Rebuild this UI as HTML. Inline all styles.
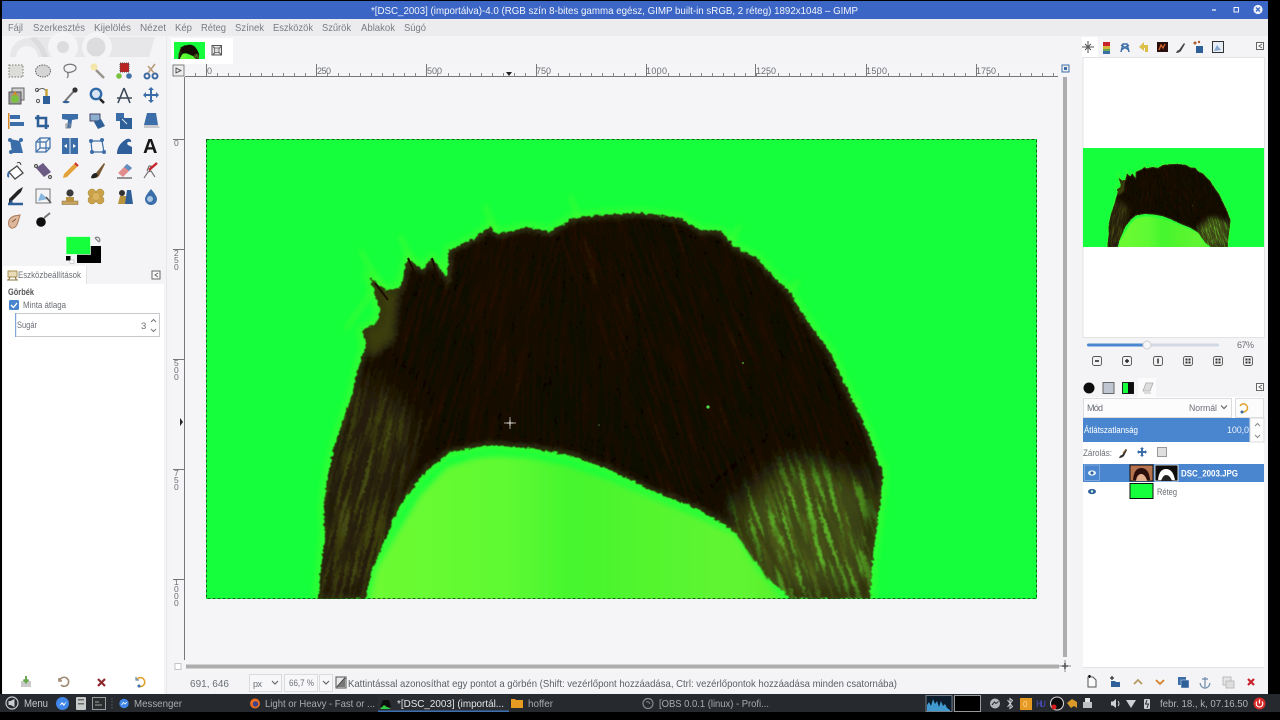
<!DOCTYPE html>
<html><head><meta charset="utf-8"><title>GIMP</title>
<style>html,body{margin:0;padding:0;background:#000;width:1280px;height:720px;overflow:hidden}svg{display:block}text{font-family:"Liberation Sans","DejaVu Sans",sans-serif;font-size:10px;fill:#6a6e74}</style></head>
<body>
<svg xmlns="http://www.w3.org/2000/svg" width="1280" height="720" viewBox="0 0 1280 720">
<defs>
<filter id="soft" x="0" y="0" width="100%" height="100%"><feGaussianBlur stdDeviation="0.32"/></filter>
<filter id="rough" x="-10%" y="-10%" width="120%" height="120%" color-interpolation-filters="sRGB"><feTurbulence type="fractalNoise" baseFrequency="0.22 0.3" numOctaves="3" seed="4"/><feDisplacementMap in="SourceGraphic" scale="5" xChannelSelector="R" yChannelSelector="G"/><feGaussianBlur stdDeviation="0.6"/></filter>
<filter id="streakB" x="0" y="0" width="100%" height="100%" color-interpolation-filters="sRGB"><feTurbulence type="fractalNoise" baseFrequency="0.3 0.016" numOctaves="3" seed="9"/><feColorMatrix values="0 0 0 0 0.17  0 0 0 0 0.09  0 0 0 0 0.02  3 0 0 0 -1.35"/></filter>
<filter id="streakO" x="0" y="0" width="100%" height="100%" color-interpolation-filters="sRGB"><feTurbulence type="fractalNoise" baseFrequency="0.24 0.016" numOctaves="3" seed="15"/><feColorMatrix values="0 0 0 0 0.3  0 0 0 0 0.34  0 0 0 0 0.09  4 0 0 0 -1.8"/></filter>
<filter id="streakG" x="0" y="0" width="100%" height="100%" color-interpolation-filters="sRGB"><feTurbulence type="fractalNoise" baseFrequency="0.2 0.016" numOctaves="3" seed="22"/><feColorMatrix values="0 0 0 0 0.36  0 0 0 0 0.7  0 0 0 0 0.16  6 0 0 0 -3.1"/><feGaussianBlur stdDeviation=".5"/></filter>
<filter id="b1" x="-20%" y="-20%" width="140%" height="140%"><feGaussianBlur stdDeviation="1.1"/></filter>
<filter id="b3" x="-20%" y="-20%" width="140%" height="140%" color-interpolation-filters="sRGB"><feGaussianBlur stdDeviation="3"/></filter>
<filter id="b4" x="-20%" y="-20%" width="140%" height="140%" color-interpolation-filters="sRGB"><feGaussianBlur stdDeviation="4"/></filter>
<filter id="b10" x="-40%" y="-40%" width="180%" height="180%"><feGaussianBlur stdDeviation="13"/></filter>
<linearGradient id="faceG" gradientUnits="userSpaceOnUse" x1="380" y1="0" x2="800" y2="0"><stop offset="0" stop-color="#6cfa33"/><stop offset=".3" stop-color="#5ffa32"/><stop offset=".46" stop-color="#45f62e"/><stop offset=".62" stop-color="#52f52f"/><stop offset=".85" stop-color="#62f531"/><stop offset="1" stop-color="#50f02c"/></linearGradient>
<clipPath id="cv"><rect x="206" y="139" width="831" height="460"/></clipPath>
<clipPath id="hc"><use href="#hairP"/></clipPath>
<mask id="mR" maskUnits="userSpaceOnUse" x="206" y="139" width="831" height="460"><path d="M730,510 L790,460 L870,480 L875,599 L770,599 Z" fill="#fff" filter="url(#b10)"/></mask>
<mask id="mL" maskUnits="userSpaceOnUse" x="206" y="139" width="831" height="460"><path d="M315,599 L325,470 L365,370 L420,420 L400,500 L370,599 Z" fill="#fff" filter="url(#b10)"/></mask>
<pattern id="tickH" x="206" y="0" width="11" height="80" patternUnits="userSpaceOnUse"><rect x="0" y="73" width="1" height="4" fill="#888"/></pattern>
<pattern id="tickV" x="0" y="139" width="80" height="11" patternUnits="userSpaceOnUse"><rect x="179" y="0" width="5" height="1" fill="#888"/></pattern>
<path id="hairP" d="M318,599 L321,570 L325,535 L324,505 L328,475 L335,445 L345,415 L352,395 L358,370 L366,345 L362,331 L378,322 L380,310 L370,278 L385,290 L400,288 L408,258 L422,270 L432,258 L447,278 L449,250 L465,243 L478,236 L490,226 L497,234 L507,232 L527,227 L550,232 L573,218 L600,215 L640,213 L680,218 L700,230 L722,232 L735,247 L757,258 L775,278 L790,292 L800,310 L815,332 L830,352 L842,378 L855,405 L868,432 L878,462 L883,470 L881,495 L878,520 L873,555 L870,599 L792,599 L770,580 L755,560 L735,532 L700,510 L650,490 L610,470 L570,455 L530,448 L490,445 L450,452 L425,472 L400,505 L385,540 L372,570 L365,599 Z"/>
<g id="art">
<rect x="206" y="139" width="831" height="460" fill="#14ff3c"/>
<use href="#hairP" fill="none" stroke="#4cff2c" stroke-width="8" filter="url(#b4)" opacity=".7"/>
<path d="M345,330 L372,292 M360,250 L385,292 M400,235 L415,270 M485,205 L495,232 M570,195 L580,222 M740,225 L728,245 M800,280 L785,295 M860,400 L848,410" stroke="#45ff30" stroke-width="3" fill="none" filter="url(#b3)"/>
<g filter="url(#rough)">
<use href="#hairP" fill="#100703"/>
<g clip-path="url(#hc)">
<g transform="rotate(16 420 420)" opacity=".75"><rect x="250" y="200" width="260" height="460" fill="#000" filter="url(#streakB)"/></g>
<rect x="470" y="200" width="160" height="280" fill="#000" filter="url(#streakB)" opacity=".55"/>
<g transform="rotate(-20 740 380)" opacity=".8"><rect x="620" y="170" width="300" height="460" fill="#000" filter="url(#streakB)"/></g>
<use href="#hairP" fill="none" stroke="#343810" stroke-width="7" filter="url(#b3)"/>
<g mask="url(#mL)"><rect x="300" y="350" width="130" height="260" fill="#2a2209" opacity=".9"/><g transform="rotate(14 360 480)" opacity=".8"><rect x="280" y="340" width="180" height="290" fill="#000" filter="url(#streakO)"/></g></g>
<path d="M362,331 L378,322 L380,310 L370,278 L385,290 L400,288 L395,340 L370,360 Z" fill="#3a3c10" filter="url(#b4)"/>
<g mask="url(#mR)"><rect x="700" y="440" width="200" height="170" fill="#3d4715"/><g transform="rotate(-17 800 530)"><rect x="680" y="410" width="240" height="240" fill="#000" filter="url(#streakO)"/><rect x="680" y="410" width="240" height="240" fill="#000" filter="url(#streakG)"/></g></g>
</g>
</g>
<path d="M367,610 L376,570 L397,533 L420,495 L447,467 L475,458 L497,456 L530,458 L570,466 L610,480 L650,497 L700,518 L735,535 L760,572 L792,610 Z" fill="url(#faceG)" filter="url(#b3)"/>
<g fill="none" stroke-linecap="round" filter="url(#b1)"><path d="M745,535 L768,578 M758,530 L790,588 M735,528 L755,560" stroke="#3a3a10" stroke-width="2.400"/></g>
<path d="M375,283 L388,300 M408,258 L420,285 M432,258 L440,285" stroke="#1a0b02" stroke-width="2" fill="none"/>
<circle cx="708" cy="407" r="1.600" fill="#50e04a"/><circle cx="743" cy="363" r="1" fill="#4c9a2c"/><circle cx="599" cy="425" r=".8" fill="#5a7a3a"/>
</g>
</defs>
<g filter="url(#soft)">
<rect width="1280" height="720" fill="#000"/>
<!-- window -->
<rect x="2" y="1" width="1266" height="18" fill="#3b66c5"/>
<text x="371" y="14" style="font-size:10.5px;fill:#f2f5fc" textLength="487" lengthAdjust="spacingAndGlyphs">*[DSC_2003] (importálva)-4.0 (RGB szín 8-bites gamma egész, GIMP built-in sRGB, 2 réteg) 1892x1048 – GIMP</text>
<g stroke="#eef2fb" stroke-width="1.3" fill="none"><path d="M1212,10 h4"/><rect x="1234" y="7.5" width="4.5" height="4.5" stroke-width="1"/></g>
<circle cx="1258" cy="9.5" r="4.6" fill="#f1f3fb"/><path d="M1256,7.5 l4,4 m0,-4 l-4,4" stroke="#3b66c5" stroke-width="1.3"/>
<rect x="2" y="19" width="1266" height="675" fill="#f4f4f6"/>
<rect x="2" y="19" width="1266" height="17" fill="#ececee"/>
<!-- menu -->
<g>
<text x="8" y="31" style="font-size:10.5px;fill:#787c82" textLength="15" lengthAdjust="spacingAndGlyphs">Fájl</text>
<text x="33" y="31" style="font-size:10.5px;fill:#787c82" textLength="52" lengthAdjust="spacingAndGlyphs">Szerkesztés</text>
<text x="94" y="31" style="font-size:10.5px;fill:#787c82" textLength="37" lengthAdjust="spacingAndGlyphs">Kijelölés</text>
<text x="140" y="31" style="font-size:10.5px;fill:#787c82" textLength="26" lengthAdjust="spacingAndGlyphs">Nézet</text>
<text x="175" y="31" style="font-size:10.5px;fill:#787c82" textLength="17" lengthAdjust="spacingAndGlyphs">Kép</text>
<text x="201" y="31" style="font-size:10.5px;fill:#787c82" textLength="25" lengthAdjust="spacingAndGlyphs">Réteg</text>
<text x="235" y="31" style="font-size:10.5px;fill:#787c82" textLength="29" lengthAdjust="spacingAndGlyphs">Színek</text>
<text x="273" y="31" style="font-size:10.5px;fill:#787c82" textLength="40" lengthAdjust="spacingAndGlyphs">Eszközök</text>
<text x="322" y="31" style="font-size:10.5px;fill:#787c82" textLength="29" lengthAdjust="spacingAndGlyphs">Szűrök</text>
<text x="361" y="31" style="font-size:10.5px;fill:#787c82" textLength="34" lengthAdjust="spacingAndGlyphs">Ablakok</text>
<text x="404" y="31" style="font-size:10.5px;fill:#787c82" textLength="22" lengthAdjust="spacingAndGlyphs">Súgó</text>
</g>
<!-- wilber ghost -->
<path d="M10,57 q1,-19 24,-20 h121 l-6,20 Z" fill="#e7e7e9"/>
<path d="M16,57 a11,11 0 0 1 22,0 Z" fill="#f4f4f6"/>
<path d="M34,37 q10,6 14,20 h-6 q-2,-10 -12,-18 Z" fill="#dcdcde"/>
<circle cx="63" cy="47" r="15" fill="#f4f4f6"/><circle cx="63" cy="47" r="6" fill="#dcdcde"/><circle cx="97" cy="47" r="15" fill="#f4f4f6"/><circle cx="96" cy="47" r="9.500" fill="#dcdcde"/>
<!-- toolbox row 1 -->
<rect x="9" y="65" width="14" height="12" fill="#dcdcd8" stroke="#777" stroke-dasharray="1.500 1.500"/>
<ellipse cx="43" cy="71" rx="7.500" ry="6" fill="#d5d5d5" stroke="#666" stroke-dasharray="1.500 1"/>
<path d="M64,68 c0,-5 12,-5 12,0 c0,4 -8,5 -9,4 c2,2 1,5 0,6 M64,68 c0,3 2,4 3,4" fill="none" stroke="#777" stroke-width="1.200"/>
<path d="M96,70 L104,78" stroke="#9a958a" stroke-width="2.500"/><circle cx="94" cy="67" r="3.500" fill="#f3e6a8"/>
<rect x="120" y="63" width="9" height="9" fill="#b22" stroke="#555" stroke-dasharray="1 1"/><circle cx="119" cy="76" r="2.800" fill="#7ac142"/><circle cx="129" cy="76" r="2.800" fill="#3f6fa8"/>
<g fill="none" stroke="#3e6aa3" stroke-width="2"><circle cx="147" cy="76" r="2.500"/><circle cx="155" cy="76" r="2.500"/><path d="M148,73 L155,64 M154,73 L148,66" stroke="#b89a78" stroke-width="1.500"/></g>
<!-- row 2 -->
<rect x="12" y="88" width="12" height="12" fill="#cfcfcf" stroke="#666"/><rect x="9" y="92" width="12" height="12" fill="#9a9a9a" stroke="#555"/><path d="M15,91 l3,5 h-6 Z" fill="#d68a2e"/><circle cx="15" cy="99" r="4" fill="#7ac142"/>
<path d="M37,91 q6,-5 9,0" fill="none" stroke="#666"/><circle cx="37" cy="90" r="1.600" fill="none" stroke="#555"/><circle cx="38" cy="101" r="1.600" fill="none" stroke="#555"/><rect x="43" y="96" width="7" height="8" fill="#2f5f98"/><path d="M46.500,89 v7" stroke="#c9a53b" stroke-width="2.500"/>
<path d="M65,101 L74,91" stroke="#777" stroke-width="2"/><circle cx="75" cy="90" r="2.600" fill="#333"/><ellipse cx="66" cy="102" rx="3.500" ry="1.300" fill="#2f5f98"/>
<circle cx="96" cy="94" r="5.200" fill="#dbe6f2" stroke="#2f6aa8" stroke-width="2.400"/><path d="M100,99 L104,103" stroke="#222" stroke-width="2.600"/>
<path d="M124,88 L118,103 M124,88 L130,103 M117,98 h15" fill="none" stroke="#3d4a5a" stroke-width="1.600"/>
<path d="M151,87 l3,3 h-2 v4 h4 v-2 l3,3 l-3,3 v-2 h-4 v4 h2 l-3,3 l-3,-3 h2 v-4 h-4 v2 l-3,-3 l3,-3 v2 h4 v-4 h-2 Z" fill="#3b6ea8"/>
<!-- row 3 -->
<rect x="8" y="113" width="1.500" height="16" fill="#d68a2e"/><rect x="10" y="115" width="10" height="4" fill="#3b6ea8"/><rect x="10" y="122" width="14" height="4" fill="#3b6ea8"/>
<path d="M38,115 v11 h11 M35,118 h11 v11" fill="none" stroke="#2f5f98" stroke-width="2.600"/>
<path d="M62,114 h16 v5 l-6,1 l-1,8 h-4 l1,-8 l-6,-1 Z" fill="#3b6ea8"/><rect x="66" y="124" width="4" height="4" fill="none" stroke="#888"/>
<rect x="90" y="114" width="10" height="7" fill="#8eaed0" stroke="#446"/><path d="M94,122 l7,-3 l4,7 l-7,3 Z" fill="#2f5f98"/>
<rect x="116" y="113" width="8" height="8" fill="#3b6ea8"/><rect x="120" y="118" width="12" height="11" fill="#2f5f98"/><path d="M122,119 l5,5" stroke="#dfe8f2"/>
<path d="M147,113 h9 l2,12 h-14 Z" fill="#3b6ea8"/><path d="M144,125 h14 l2,3 h-16 Z" fill="#c9c9cf"/>
<!-- row 4 -->
<path d="M10,139 L20,141 L23,153 H12 Z" fill="#3b6ea8"/><circle cx="10" cy="140" r="2" fill="#3b6ea8"/><circle cx="21" cy="140" r="2" fill="#3b6ea8"/><circle cx="11" cy="152" r="2" fill="#3b6ea8"/>
<path d="M36,142 h10 v10 h-10 Z M40,138 h10 v10 h-10 Z M36,142 l4,-4 M46,142 l4,-4 M46,152 l4,-4 M36,152 l4,-4" fill="none" stroke="#3b6ea8" stroke-width="1.200"/>
<rect x="62" y="138" width="16" height="16" fill="#3b6ea8"/><rect x="69.500" y="138" width="1" height="16" fill="#dfe8f2"/><path d="M64,146 l3,-2 v4 Z M76,146 l-3,-2 v4 Z" fill="#fff"/>
<path d="M91,141 h11 l2,11 h-12 Z" fill="none" stroke="#3b6ea8" stroke-width="1.200"/><g fill="#3b6ea8"><circle cx="91" cy="141" r="2"/><circle cx="102" cy="140" r="2"/><circle cx="92" cy="152" r="2"/><circle cx="104" cy="152" r="2"/></g>
<path d="M117,154 c0,-5 2,-10 8,-14 c4,-3 7,0 6,2 c-3,-1 -5,1 -3,3 l4,2 v7 Z" fill="#2f5f98"/>
<text x="143" y="153" style="font-size:20px;font-weight:bold;fill:#151515">A</text>
<!-- row 5 -->
<path d="M9,172 l8,-6 l6,7 l-8,6 Z" fill="#fff" stroke="#444" stroke-width="1.300"/><path d="M17,163 q3,-2 4,2" fill="none" stroke="#444"/><path d="M9,172 q-2,4 0,5" stroke="#3b6ea8" stroke-width="2" fill="none"/>
<path d="M36,168 l7,-5 l8,9 l-7,5 Z" fill="#6a5a84"/><circle cx="36" cy="166" r="1.600" fill="#bbb" stroke="#555"/><circle cx="50" cy="177" r="1.600" fill="#bbb" stroke="#555"/>
<path d="M63,178 l1,-4 l11,-11 l3,3 l-11,11 Z" fill="#e3a13a"/><path d="M75,163 l3,3" stroke="#c33" stroke-width="2"/>
<path d="M91,178 q1,-5 5,-5 l8,-10 l1,1 l-6,12 q-3,3 -8,2 Z" fill="#7a5a30"/><path d="M91,178 q1,-5 5,-5 l2,2 q-2,4 -7,3Z" fill="#222"/>
<path d="M118,173 l9,-9 l5,4 l-9,9 Z" fill="#e28d8d"/><path d="M127,164 l5,4 l-3,3 l-5,-4 Z" fill="#5f8fc0"/><path d="M117,178 h15" stroke="#555" stroke-width="1.200"/>
<path d="M144,178 l4,-6 l3,-1 l4,6 M147,171 l2,-5 h2 l-2,6" fill="none" stroke="#666" stroke-width="1.100"/><path d="M149,170 l8,-7" stroke="#c8242c" stroke-width="2.400"/>
<!-- row 6 -->
<path d="M9,204 v-5 l9,-9 l5,-3 l-2,5 l-9,9 Z" fill="#222"/><path d="M8,204 h15" stroke="#2f5f98" stroke-width="2.500"/><path d="M10,199 l3,3 l-2,2 Z" fill="#2f5f98"/>
<rect x="36" y="189" width="14" height="14" fill="#f4f4f4" stroke="#777"/><path d="M38,201 l3,-8 l7,6 Z" fill="#88b8e0"/><path d="M46,197 l5,6" stroke="#555" stroke-width="1.600"/>
<rect x="62" y="201" width="16" height="3.500" fill="#c9a35c" stroke="#7a6a44" stroke-width=".5"/><rect x="66" y="197" width="8" height="4" fill="#b8923c"/><circle cx="70" cy="193" r="3.600" fill="#3a3a3a"/>
<g fill="#c9a24a" stroke="#a88838" stroke-width=".5"><circle cx="92" cy="193" r="4"/><circle cx="100" cy="193" r="4"/><circle cx="92" cy="200" r="4"/><circle cx="100" cy="200" r="4"/></g><circle cx="96" cy="196.500" r="3.500" fill="#d9b35e"/>
<path d="M118,204 l2,-8 h6 v8 Z" fill="#b8923c"/><circle cx="122" cy="193" r="3" fill="#333"/><path d="M127,190 h4 l2,14 h-8 Z" fill="#2f5f98"/>
<path d="M151,189 q6,7 6,10 a6,6 0 0 1 -12,0 q0,-3 6,-10 Z" fill="#3b6ea8"/><circle cx="150" cy="199" r="3" fill="#a9c6e2"/>
<!-- row 7 -->
<path d="M9,226 q-2,-7 5,-10 l6,-1 l-2,7 q-2,7 -7,6 Z" fill="#dfb79a" stroke="#a8795a" stroke-width="1"/><path d="M12,222 l4,-3" stroke="#7a5a44"/>
<circle cx="41" cy="222" r="4.800" fill="#111"/><path d="M44,218 l6,-5" stroke="#777" stroke-width="2"/>
<!-- fg/bg -->
<rect x="77" y="246" width="24" height="17" fill="#000"/><rect x="66" y="236.500" width="24.500" height="18" fill="#14ff3c" stroke="#fff" stroke-width=".6"/>
<rect x="66" y="256" width="4.500" height="4.500" fill="#000"/><rect x="70" y="260" width="4" height="3.500" fill="#fff" stroke="#999" stroke-width=".4"/>
<path d="M95,238 a2,2 0 1 1 4,4 M95,238 l4,4" fill="none" stroke="#888" stroke-width="1.300"/>
<!-- tool options -->
<rect x="166" y="36" width="1" height="658" fill="#e8e8ea"/>
<rect x="3" y="284" width="161" height="410" fill="#fff"/>
<rect x="3" y="266" width="83" height="18" fill="#fff"/><rect x="86" y="266" width="1" height="18" fill="#e3e3e5"/>
<path d="M8,271 h9 v6 h-9 Z" fill="#e9dcb8" stroke="#a68c4c" stroke-width=".9"/><path d="M7,280 h11 M10,277 l-1.500,3 M15,277 l1.500,3" stroke="#8a7440" stroke-width="1" fill="none"/>
<text x="18" y="278" style="font-size:9px" textLength="63" lengthAdjust="spacingAndGlyphs">Eszközbeállítások</text>
<rect x="152" y="271" width="8" height="8" fill="#fafafa" stroke="#666"/><path d="M158,273 l-3,2 l3,2" fill="none" stroke="#666"/>
<text x="8" y="295" style="font-size:9px;font-weight:bold;fill:#555" textLength="26" lengthAdjust="spacingAndGlyphs">Görbék</text>
<rect x="9" y="300" width="10" height="10" rx="1.500" fill="#4a86cf"/><path d="M11,305 l2.500,2.500 l3.500,-4.500" stroke="#fff" stroke-width="1.400" fill="none"/>
<text x="23" y="308" style="font-size:9px" textLength="43" lengthAdjust="spacingAndGlyphs">Minta átlaga</text>
<rect x="15.500" y="313.500" width="144" height="23" fill="#fff" stroke="#c9c9cd"/><rect x="15" y="313" width="1.200" height="24" fill="#7fa6d6"/>
<text x="17" y="328" style="font-size:9px" textLength="20" lengthAdjust="spacingAndGlyphs">Sugár</text>
<text x="141" y="329" style="font-size:9.500px">3</text>
<path d="M151,322 l2.500,-2.500 l2.500,2.500 M151,329 l2.500,2.500 l2.500,-2.500" fill="none" stroke="#777"/>
<!-- canvas region -->
<rect x="171" y="38" width="62" height="26" fill="#fff"/>
<rect x="171" y="64" width="900" height="608" fill="#f5f5f7"/>
<rect x="184" y="77" width="874" height="583" fill="#f5f5f8"/>
<rect x="174" y="42" width="31" height="17" fill="#14ff3c"/>
<svg x="174" y="42" width="31" height="17" viewBox="206 139 831 460"><use href="#art" clip-path="url(#cv)"/></svg>
<rect x="212" y="45.500" width="9.500" height="9.500" fill="#e8e8e8" stroke="#555"/><path d="M213,46.500 l8,8 m0,-8 l-8,8" stroke="#555"/><rect x="214.500" y="48" width="4.500" height="4.500" fill="#ddd" stroke="#555" stroke-width=".7"/>
<!-- rulers -->
<rect x="173" y="65" width="11" height="11" fill="#eee" stroke="#666" stroke-width=".8"/><path d="M176,68 v5 l5,-2.500 Z" fill="none" stroke="#555"/>
<rect x="185" y="76" width="873" height="1" fill="#777"/><rect x="184" y="77" width="1" height="583" fill="#777"/>
<rect x="186" y="64" width="872" height="12" fill="url(#tickH)"/>
<rect x="173" y="77" width="11" height="583" fill="url(#tickV)"/>
<g fill="#777"><rect x="206" y="64" width="1" height="12"/><rect x="316" y="64" width="1" height="12"/><rect x="426" y="64" width="1" height="12"/><rect x="536" y="64" width="1" height="12"/><rect x="646" y="64" width="1" height="12"/><rect x="755" y="64" width="1" height="12"/><rect x="866" y="64" width="1" height="12"/><rect x="976" y="64" width="1" height="12"/></g>
<g><text x="207" y="74" style="font-size:9px">0</text><text x="317" y="74" style="font-size:9px" textLength="14">250</text><text x="427" y="74" style="font-size:9px" textLength="15">500</text><text x="536" y="74" style="font-size:9px" textLength="15">750</text><text x="646" y="74" style="font-size:9px" textLength="21">1000</text><text x="756" y="74" style="font-size:9px" textLength="20">1250</text><text x="866" y="74" style="font-size:9px" textLength="21">1500</text><text x="976" y="74" style="font-size:9px" textLength="20">1750</text></g>
<path d="M506,72 h6 l-3,4 Z" fill="#222"/>
<g fill="#777"><rect x="173" y="139" width="11" height="1"/><rect x="173" y="249" width="11" height="1"/><rect x="173" y="359" width="11" height="1"/><rect x="173" y="469" width="11" height="1"/><rect x="173" y="579" width="11" height="1"/></g>
<g><text x="174" y="146" style="font-size:8.500px">0</text>
<text x="174" y="256" style="font-size:8.500px">2</text><text x="174" y="263" style="font-size:8.500px">5</text><text x="174" y="270" style="font-size:8.500px">0</text>
<text x="174" y="366" style="font-size:8.500px">5</text><text x="174" y="373" style="font-size:8.500px">0</text><text x="174" y="380" style="font-size:8.500px">0</text>
<text x="174" y="476" style="font-size:8.500px">7</text><text x="174" y="483" style="font-size:8.500px">5</text><text x="174" y="490" style="font-size:8.500px">0</text>
<text x="174" y="585" style="font-size:8.500px">1</text><text x="174" y="592" style="font-size:8.500px">0</text><text x="174" y="599" style="font-size:8.500px">0</text><text x="174" y="606" style="font-size:8.500px">0</text></g>
<path d="M180,418 v8 l3,-4 Z" fill="#222"/>
<!-- image -->
<use href="#art" clip-path="url(#cv)"/>
<rect x="206.500" y="139.500" width="830" height="459" fill="none" stroke="#0b3a12" stroke-dasharray="3 2" stroke-width=".8"/>
<path d="M510,417 v12 M504,423 h12" stroke="#8a8a80" stroke-width="1.200"/><path d="M507,423 h6 M510,420 v6" stroke="#e8e8e0" stroke-width=".8"/>
<!-- scrollbars -->
<rect x="1062" y="65" width="7" height="7" fill="#eee" stroke="#3b6ea8"/><rect x="1064" y="67" width="3" height="3" fill="#3b6ea8"/>
<rect x="1063" y="77" width="4" height="580" fill="#adadad"/>
<rect x="186" y="664.500" width="873" height="4" fill="#adadad"/>
<rect x="175" y="663.500" width="6" height="6" fill="#fff" stroke="#c4c4c4"/>
<path d="M1065,660 v12 M1059,666 h12" stroke="#888"/><path d="M1065,663 v6 M1062,666 h6" stroke="#555" stroke-width="1.600"/>
<!-- status -->
<rect x="167" y="672" width="905" height="22" fill="#f4f4f6"/>
<text x="190" y="687" style="font-size:10px" textLength="39" lengthAdjust="spacingAndGlyphs">691, 646</text>
<rect x="249.500" y="674.500" width="32" height="17" fill="#f7f7f9" stroke="#dcdcdf"/><text x="253" y="687" style="font-size:9px" textLength="9">px</text><path d="M272,681 l3,3 l3,-3" fill="none" stroke="#666" stroke-width="1.200"/>
<rect x="284.500" y="674.500" width="33" height="17" fill="#f7f7f9" stroke="#dcdcdf"/><text x="289" y="686" style="font-size:9px" textLength="25" lengthAdjust="spacingAndGlyphs">66,7 %</text>
<rect x="319.500" y="674.500" width="13" height="17" fill="#f7f7f9" stroke="#dcdcdf"/><path d="M323,681 l3,3 l3,-3" fill="none" stroke="#666" stroke-width="1.200"/>
<rect x="336" y="677" width="10" height="11" fill="#e8e8e8" stroke="#555"/><path d="M337,687 L345,678" stroke="#222" stroke-width="1.300"/><path d="M337,687 L345,678 V687 Z" fill="#777"/>
<text x="348" y="687" style="font-size:10.500px;fill:#5a5e64" textLength="549" lengthAdjust="spacingAndGlyphs">Kattintással azonosíthat egy pontot a görbén (Shift: vezérlőpont hozzáadása, Ctrl: vezérlőpontok hozzáadása minden csatornába)</text>
<!-- tool options bottom -->
<path d="M21,681 h10 v6 h-10 Z" fill="#c9c9c9"/><path d="M26,676 v6 M23.500,679.500 l2.500,3 l2.500,-3" stroke="#6aa84f" stroke-width="2" fill="none"/>
<path d="M60,680 a4.500,4.500 0 1 1 1,5 M59,678 v3 h3" fill="none" stroke="#a08a72" stroke-width="1.600"/>
<path d="M98,679 l7,7 m0,-7 l-7,7" stroke="#8e2a2e" stroke-width="2.200"/>
<path d="M137,679 a4.500,4.500 0 1 1 1,7" fill="none" stroke="#e0a22a" stroke-width="1.600"/><circle cx="139" cy="686" r="1.500" fill="#3b6ea8"/><path d="M136,677 v3 h3" fill="none" stroke="#3b6ea8"/>
<!-- right dock -->
<rect x="1076" y="36" width="192" height="658" fill="#f4f4f6"/>
<rect x="1082" y="37" width="16" height="20" fill="#fff"/>
<rect x="1083" y="57.500" width="181.500" height="280" fill="#fff" stroke="#e3e3e5"/>
<path d="M1088,41 v12 M1082,47 h12 M1085,44 l6,6 M1091,44 l-6,6" stroke="#555" stroke-width="1"/>
<rect x="1103" y="42" width="7" height="4" fill="#c8242c"/><rect x="1103" y="46" width="7" height="3" fill="#d8b43a"/><rect x="1103" y="49" width="7" height="2" fill="#6aa84f"/><rect x="1103" y="51" width="7" height="3" fill="#3b6ea8"/>
<path d="M1121,52 l2,-8 h4 l2,8 M1121,45 l8,5 m0,-5 l-8,5" fill="none" stroke="#3b6ea8" stroke-width="1.500"/>
<path d="M1139,47 l5,-5 v3 h4 v7 h-3 v-4 h-1 v3 Z" fill="#dcc04a"/>
<rect x="1157" y="42" width="11" height="10" fill="#2a1008"/><path d="M1159,50 l2,-5 l2,3 l2,-4" stroke="#d8642a" fill="none" stroke-width="1.300"/>
<path d="M1176,53 q1,-3 3,-3 l5,-7 l1,1 l-4,7 q-2,2 -5,2 Z" fill="#444"/>
<rect x="1196" y="46" width="7" height="7" fill="#2f5f98"/><circle cx="1195" cy="43" r="1.500" fill="#a8592a"/><circle cx="1199" cy="42" r="1.200" fill="#a8592a"/>
<rect x="1212.500" y="41.500" width="11" height="11" fill="#e6edf5" stroke="#333"/><path d="M1214,51 l3,-6 l4,5" fill="#88a8d0"/>
<rect x="1256.500" y="42.500" width="7" height="7" fill="#fafafa" stroke="#666"/><path d="M1262,44 l-3,2 l3,2" fill="none" stroke="#666"/>
<!-- nav thumb -->
<rect x="1083" y="148" width="181" height="99" fill="#14ff3c"/>
<svg x="1083" y="148" width="181" height="99" viewBox="206 139 831 460" preserveAspectRatio="none"><use href="#art" clip-path="url(#cv)"/></svg>
<!-- slider -->
<rect x="1087" y="343.500" width="132" height="3" rx="1.500" fill="#d2d8e4"/><rect x="1087" y="343.500" width="60" height="3" rx="1.500" fill="#4a86cf"/>
<circle cx="1147" cy="345" r="4" fill="#f6f6f6" stroke="#cfcfd2"/>
<text x="1237" y="348" style="font-size:9px" textLength="17">67%</text>
<g fill="#f2f2f2" stroke="#555" stroke-width=".9"><rect x="1092.500" y="356.500" width="9" height="9" rx="2"/><rect x="1122.500" y="356.500" width="9" height="9" rx="2"/><rect x="1153.500" y="356.500" width="9" height="9" rx="2"/><rect x="1183.500" y="356.500" width="9" height="9" rx="2"/><rect x="1213.500" y="356.500" width="9" height="9" rx="2"/><rect x="1243.500" y="356.500" width="9" height="9" rx="2"/></g>
<g stroke="#222" stroke-width="1.400"><path d="M1095,361 h4 M1125,361 h4 M1127,359 v4 M1158,358.500 v5"/></g>
<g fill="#333"><rect x="1185.500" y="358.500" width="2" height="2"/><rect x="1188.500" y="358.500" width="2" height="2"/><rect x="1185.500" y="361.500" width="2" height="2"/><rect x="1188.500" y="361.500" width="2" height="2"/><rect x="1215.500" y="358.500" width="2" height="2"/><rect x="1218.500" y="358.500" width="2" height="2"/><rect x="1215.500" y="361.500" width="2" height="2"/><rect x="1218.500" y="361.500" width="2" height="2"/><rect x="1245.500" y="358.500" width="2" height="2"/><rect x="1248.500" y="358.500" width="2" height="2"/><rect x="1245.500" y="361.500" width="2" height="2"/><rect x="1248.500" y="361.500" width="2" height="2"/></g>
<!-- layers tabs -->
<rect x="1138" y="378" width="18" height="19" fill="#fbfbfb"/>
<circle cx="1089" cy="388" r="5.500" fill="#111"/>
<rect x="1103" y="382.500" width="11" height="11" fill="#bfc6d2" stroke="#666"/>
<rect x="1122.500" y="382.500" width="11" height="11" fill="#14ff3c" stroke="#222"/><rect x="1128" y="382.500" width="5.500" height="11" fill="#111"/>
<path d="M1143,391 l3,-8 h7 l-3,8 Z M1144,393 h7" fill="#ddd" stroke="#aaa" stroke-width=".8"/>
<rect x="1256.500" y="383.500" width="7" height="7" fill="#fafafa" stroke="#666"/><path d="M1262,385 l-3,2 l3,2" fill="none" stroke="#666"/>
<rect x="1083" y="397" width="181" height="297" fill="#fff"/>
<rect x="1083.500" y="398.500" width="148" height="19" fill="#fcfcfd" stroke="#dcdcdf"/>
<text x="1087" y="411" style="font-size:9px" textLength="16">Mód</text><text x="1189" y="411" style="font-size:9px" textLength="28" lengthAdjust="spacingAndGlyphs">Normál</text>
<path d="M1221,405.500 l3,3 l3,-3 M1252,405.500 l3,3 l3,-3" fill="none" stroke="#666" stroke-width="1.200"/>
<rect x="1235.500" y="398.500" width="28" height="19" fill="#fcfcfd" stroke="#dcdcdf"/>
<path d="M1240,406 a4,4 0 1 1 1,5" fill="none" stroke="#e0a22a" stroke-width="1.500"/><circle cx="1242" cy="412" r="1.500" fill="#3b6ea8"/>
<rect x="1083" y="418" width="167" height="24" fill="#4a86cf"/>
<rect x="1250" y="418" width="14" height="24" fill="#fcfcfd" stroke="#dcdcdf"/>
<text x="1084" y="433" style="font-size:9px;fill:#fff" textLength="54" lengthAdjust="spacingAndGlyphs">Átlátszatlanság</text>
<text x="1227" y="433" style="font-size:9px;fill:#e8f0fa" textLength="22">100,0</text>
<path d="M1255,426 l2.500,-2.500 l2.500,2.500 M1255,435 l2.500,2.500 l2.500,-2.500" fill="none" stroke="#888"/>
<text x="1083" y="456" style="font-size:9px" textLength="29" lengthAdjust="spacingAndGlyphs">Zárolás:</text>
<path d="M1119,458 q1,-3 3,-3 l4,-6 l1,1 l-3,6 q-2,2 -5,2 Z" fill="#333"/><path d="M1123,453 l3,-4" stroke="#a87a3a"/>
<path d="M1142,447 l2,2 h-1 v2 h2 v-1 l2,2 l-2,2 v-1 h-2 v2 h1 l-2,2 l-2,-2 h1 v-2 h-2 v1 l-2,-2 l2,-2 v1 h2 v-2 h-1 Z" fill="#3b6ea8"/>
<rect x="1157.500" y="447.500" width="9" height="9" fill="#dfdfdf" stroke="#999"/>
<!-- layer list -->
<rect x="1083" y="464" width="181" height="18" fill="#4a86cf"/>
<rect x="1084.500" y="465" width="15" height="15.500" fill="none" stroke="#7fa8dc"/>
<ellipse cx="1092" cy="473" rx="4" ry="2.600" fill="#e8f0fa"/><circle cx="1092" cy="473" r="1.500" fill="#2f5f98"/>
<ellipse cx="1092" cy="491.500" rx="4" ry="2.600" fill="#2f5f98"/><circle cx="1092" cy="491.500" r="1.200" fill="#cfe"/>
<rect x="1130" y="465" width="23" height="16" fill="#b6714e" stroke="#111"/><path d="M1133,480 q1,-12 8,-12 q8,0 9,12 h-3 q-2,-6 -6,-6 q-4,0 -5,6 Z" fill="#2a1008"/><path d="M1136,481 q2,-7 5,-7 q4,0 6,7 Z" fill="#e3b091"/>
<rect x="1155" y="465" width="23" height="16" fill="#111" stroke="#fff" stroke-width=".8"/><path d="M1158,480 q1,-11 8,-11 q7,0 9,11 Z" fill="#fff"/><path d="M1161,481 q2,-6 5,-6 q4,0 6,6 Z" fill="#222"/>
<text x="1181" y="476.500" style="font-size:9px;font-weight:bold;fill:#fff" textLength="57" lengthAdjust="spacingAndGlyphs">DSC_2003.JPG</text>
<rect x="1130" y="483.500" width="23" height="15" fill="#14ff3c" stroke="#111"/>
<text x="1157" y="495" style="font-size:9px" textLength="20" lengthAdjust="spacingAndGlyphs">Réteg</text>
<rect x="1076" y="668" width="192" height="26" fill="#f4f4f6"/>
<rect x="1083" y="667" width="181" height="1" fill="#e3e3e5"/>
<!-- layer bottom buttons -->
<path d="M1088,677 h5 l3,3 v7 h-8 Z" fill="#fafafa" stroke="#555"/><path d="M1088,676 h3 M1089.500,675 v3" stroke="#111"/>
<path d="M1111,681 h4 l1,1 h4 v5 h-9 Z" fill="#2f5f98"/><path d="M1112,676 v4 M1110,678 h4" stroke="#111"/>
<path d="M1134,684 l4,-4 l4,4" fill="none" stroke="#b59a66" stroke-width="1.800"/>
<path d="M1156,680 l4,4 l4,-4" fill="none" stroke="#d6822a" stroke-width="1.800"/>
<rect x="1178" y="677" width="8" height="8" fill="#3b6ea8"/><rect x="1181" y="680" width="8" height="8" fill="#2f5f98" stroke="#dfe8f2" stroke-width=".5"/>
<path d="M1205,677 v10 M1202,679 h6 M1200,683 q1,5 5,5 q4,0 5,-5" fill="none" stroke="#6a89ac" stroke-width="1.200"/>
<rect x="1223" y="677" width="8" height="8" fill="#e6e6e6" stroke="#bbb"/><rect x="1226" y="681" width="8" height="7" fill="#ddd" stroke="#bbb"/>
<path d="M1248,679 l6,6 m0,-6 l-6,6" stroke="#c8242c" stroke-width="2.200"/>
<!-- taskbar -->
<rect x="0" y="694" width="1280" height="18" fill="#27292d"/>
<circle cx="12" cy="703" r="6" fill="none" stroke="#c9ccd0" stroke-width="1.200"/><path d="M8.500,701 h2 l4,-2 v8 l-4,-2 h-2 Z" fill="#c9ccd0"/>
<text x="24" y="707" style="font-size:11px;fill:#c6c9cd" textLength="24" lengthAdjust="spacingAndGlyphs">Menu</text>
<circle cx="62.500" cy="703.500" r="6.500" fill="#3f86e8"/><path d="M59,706 l3,-4 l2,2 l3,-3 l-3,5 l-2,-2 Z" fill="#fff"/>
<rect x="76" y="697" width="10" height="13" rx="1" fill="#c8cbc9"/><rect x="78" y="699" width="6" height="1.500" fill="#6a6a6a"/><rect x="78" y="703" width="6" height="1.500" fill="#6a6a6a"/>
<rect x="92.500" y="697.500" width="13" height="12" fill="#2a2d2d" stroke="#9a9d9d"/><path d="M95,702 h4 M95,705 h7" stroke="#c9ccc9" stroke-width=".8"/>
<path d="M112,698 v11" stroke="#55585c" stroke-dasharray="1.500 1.500"/>
<circle cx="124" cy="703.500" r="4.700" fill="#3f86e8"/><path d="M121.500,705 l2,-2.500 l1.500,1.500 l2,-2" stroke="#fff" fill="none" stroke-width=".8"/>
<text x="134" y="707" style="font-size:10.500px;fill:#a8abaf" textLength="48" lengthAdjust="spacingAndGlyphs">Messenger</text>
<circle cx="255" cy="703.500" r="5" fill="#e86d24"/><circle cx="255.500" cy="704" r="2.700" fill="#3a3f8f"/>
<text x="265" y="707" style="font-size:10.500px;fill:#a8abaf" textLength="110" lengthAdjust="spacingAndGlyphs">Light or Heavy - Fast or ...</text>
<rect x="378" y="695" width="131" height="17" fill="#2b2e33"/><rect x="378" y="710.500" width="131" height="1.500" fill="#3c6fb0"/>
<path d="M380,707 l3,-7 h6 l2,7 Z" fill="#0c0c0c"/><path d="M380,709 l4,-4 l3,2 l4,2 Z" fill="#2ecc40"/>
<text x="397" y="707" style="font-size:10.500px;fill:#e3e5e8" textLength="107" lengthAdjust="spacingAndGlyphs">*[DSC_2003] (importál...</text>
<path d="M511,699 h4 l1,1 h7 v8 h-12 Z" fill="#e69a22"/>
<text x="528" y="707" style="font-size:10.500px;fill:#a8abaf" textLength="25" lengthAdjust="spacingAndGlyphs">hoffer</text>
<circle cx="648" cy="703.500" r="5" fill="none" stroke="#888" stroke-width="1.200"/><path d="M646,702 a3,3 0 0 1 4,2" fill="none" stroke="#888"/>
<text x="659" y="707" style="font-size:10.500px;fill:#a8abaf" textLength="110" lengthAdjust="spacingAndGlyphs">[OBS 0.0.1 (linux) - Profi...</text>
<rect x="926" y="695.500" width="26" height="16" fill="#0e1a2c" stroke="#9aa6b2" stroke-width=".7"/>
<path d="M927,711 v-6 l2,-3 l2,4 l2,-7 l2,5 l2,-3 l2,6 l2,-6 l2,5 l2,-2 l2,4 l3,2 v1 Z" fill="#3f9ad0"/>
<rect x="954.500" y="695.500" width="26" height="16" fill="#000" stroke="#cfd2d6" stroke-width=".7"/>
<circle cx="995" cy="703.500" r="5" fill="#b4b7bb"/><path d="M992,705 l2.500,-3 l1.500,1.500 l2.500,-2" stroke="#27292d" fill="none"/>
<path d="M1007.500,700 l5,6.500 l-2.500,2 v-10 l2.500,2 l-5,6.500" fill="none" stroke="#d0d3d6" stroke-width="1"/>
<rect x="1020" y="698" width="12" height="12" fill="#e69a22"/><text x="1023" y="707" style="font-size:8px;fill:#ffd79a">0</text>
<text x="1036" y="707" style="font-size:9.500px;fill:#4a4fc0" textLength="10">HU</text>
<circle cx="1057" cy="703.500" r="6.500" fill="#111" stroke="#d5d5d5" stroke-width="1.100"/><circle cx="1054" cy="707" r="2.500" fill="#d91f1f"/>
<path d="M1067,703 l5,-4 l5,3 v6 l-3,-2 l-3,2 Z" fill="#d99a2a"/>
<rect x="1083" y="702" width="9" height="6" fill="#bfc2c5"/><rect x="1085" y="698" width="5" height="4" fill="#e0e2e4"/>
<path d="M1111,701.500 h2 l3,-2.500 v9 l-3,-2.500 h-2 Z" fill="#cfd2d5"/><path d="M1118,701 q2,3 0,5" stroke="#cfd2d5" fill="none"/>
<path d="M1126,700 h10 l-5,8 Z" fill="#cfd2d5"/>
<rect x="1144" y="699" width="6" height="10" rx="1" fill="#cfd2d5"/><path d="M1147,700 l-1.500,4 h3 l-1.500,4" stroke="#27292d" fill="none"/>
<text x="1160" y="707" style="font-size:10.500px;fill:#b0b3b7" textLength="88" lengthAdjust="spacingAndGlyphs">febr. 18., k, 07.16.50</text>
<circle cx="1259.500" cy="703.500" r="6" fill="#d92c2c"/><path d="M1259.500,699.500 v4" stroke="#fff" stroke-width="1.300"/><path d="M1257,701.500 a3.300,3.300 0 1 0 5,0" fill="none" stroke="#fff" stroke-width="1.100"/>
<rect x="0" y="0" width="1280" height="1" fill="#000"/>
<rect x="0" y="712" width="1280" height="8" fill="#000"/>
</g>
</svg>
</body></html>
